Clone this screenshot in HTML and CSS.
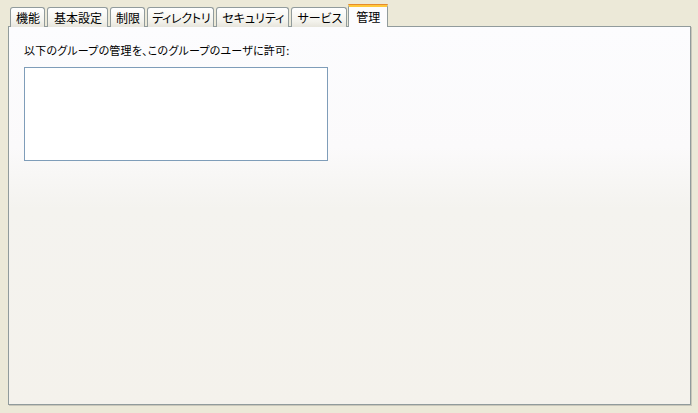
FILE: index.html
```html
<!DOCTYPE html>
<html lang="ja">
<head>
<meta charset="utf-8">
<link rel="stylesheet" href="styles.css">
</head>
<body>
<div class="wrap">
  <div class="tabs">
    <div class="tab">機能</div>
    <div class="tab wide">基本設定</div>
    <div class="tab">制限</div>
    <div class="tab kana">ディレクトリ</div>
    <div class="tab">セキュリティ</div>
    <div class="tab">サービス</div>
    <div class="tab active">管理</div>
  </div>
  <div class="panel">
    <p class="label">以下のグループの管理を、このグループのユーザに許可:</p>
    <div class="listbox"></div>
  </div>
</div>
</body>
</html>
```
FILE: styles.css
```css
html, body {
  margin: 0;
  padding: 0;
  background: #ECE9D8;
  width: 698px;
  height: 413px;
  overflow: hidden;
}
body {
  font-family: "Noto Sans CJK JP", "Liberation Sans", sans-serif;
  font-size: 12px;
  font-feature-settings: "palt";
  color: #000;
}
.wrap {
  padding: 4px 0 0 8px;
}
.tabs {
  display: flex;
  align-items: flex-end;
  gap: 2px;
  padding-left: 2px;
  margin-bottom: -1px;
  position: relative;
  z-index: 1;
}
.tab {
  height: 20px;
  line-height: 19px;
  padding: 0 4px 0 5px;
  box-sizing: border-box;
  border: 1px solid #919B9C;
  border-bottom: none;
  border-radius: 3px 3px 0 0;
  background: linear-gradient(#FFFFFF, #F3F2EC 70%, #E7E5DC);
}
.tab.wide {
  padding: 0 5px 0 6px;
}
.tab.kana {
  padding: 0 3px 0 4px;
  letter-spacing: -0.3px;
}
.tab.active {
  height: 23px;
  margin-left: -1px;
  padding: 0 7px;
  background: #FCFCFE;
  border-top: 3px solid #FFC83C;
  line-height: 19px;
  position: relative;
}
.tab.active::before {
  content: "";
  position: absolute;
  left: -1px;
  right: -1px;
  top: -3px;
  height: 1px;
  background: #E68B2C;
  border-radius: 3px 3px 0 0;
}
.panel {
  width: 683px;
  height: 379px;
  box-sizing: border-box;
  border: 1px solid #919B9C;
  background: linear-gradient(#FCFCFE 0%, #FBFAFB 32%, #F4F3EF 48%, #F4F2EC 100%);
  box-shadow: 1px 1px 0 #C9C7BA;
  padding: 15px 0 0 15px;
}
.label {
  margin: 0;
  line-height: 16px;
  font-size: 11px;
  letter-spacing: 0.2px;
}
.listbox {
  margin-top: 9px;
  width: 304px;
  height: 94px;
  box-sizing: border-box;
  border: 1px solid #7F9DB9;
  background: #FFFFFF;
}
```
